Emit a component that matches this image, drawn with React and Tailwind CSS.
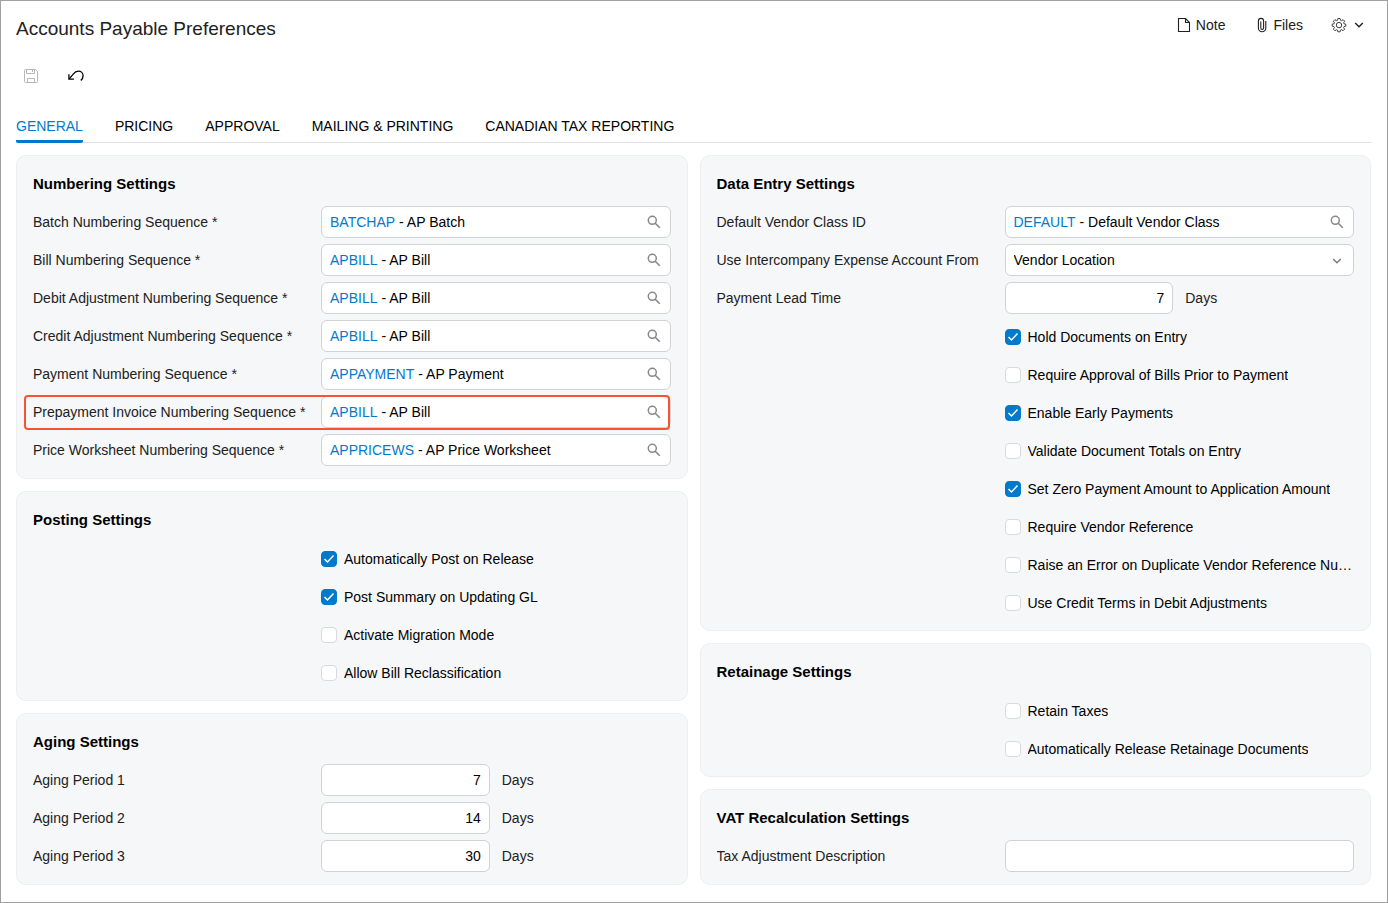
import React, { useId, useState } from "react";

const numberingRows = [
  { label: "Batch Numbering Sequence", code: "BATCHAP", name: "AP Batch" },
  { label: "Bill Numbering Sequence", code: "APBILL", name: "AP Bill" },
  { label: "Debit Adjustment Numbering Sequence", code: "APBILL", name: "AP Bill" },
  { label: "Credit Adjustment Numbering Sequence", code: "APBILL", name: "AP Bill" },
  { label: "Payment Numbering Sequence", code: "APPAYMENT", name: "AP Payment" },
  { label: "Prepayment Invoice Numbering Sequence", code: "APBILL", name: "AP Bill", highlight: true },
  { label: "Price Worksheet Numbering Sequence", code: "APPRICEWS", name: "AP Price Worksheet" },
];

const postingOptions = [
  { label: "Automatically Post on Release", checked: true },
  { label: "Post Summary on Updating GL", checked: true },
  { label: "Activate Migration Mode" },
  { label: "Allow Bill Reclassification" },
];

const agingRows = [
  { label: "Aging Period 1", value: "7" },
  { label: "Aging Period 2", value: "14" },
  { label: "Aging Period 3", value: "30" },
];

const dataEntryOptions = [
  { label: "Hold Documents on Entry", checked: true },
  { label: "Require Approval of Bills Prior to Payment" },
  { label: "Enable Early Payments", checked: true },
  { label: "Validate Document Totals on Entry" },
  { label: "Set Zero Payment Amount to Application Amount", checked: true },
  { label: "Require Vendor Reference" },
  { label: "Raise an Error on Duplicate Vendor Reference Number" },
  { label: "Use Credit Terms in Debit Adjustments" },
];

const retainageOptions = [
  { label: "Retain Taxes" },
  { label: "Automatically Release Retainage Documents" },
];

const tabs = ["GENERAL", "PRICING", "APPROVAL", "MAILING & PRINTING", "CANADIAN TAX REPORTING"];

const SaveIcon = () => (
  <svg width="16" height="16" viewBox="0 0 16 16" fill="none" stroke="#b5b7ba">
    <path d="M2.5 1.5h10l2 2v10a1 1 0 0 1-1 1h-11a1 1 0 0 1-1-1v-11a1 1 0 0 1 1-1z" />
    <path d="M3.5 1.5v4h8v-4M9.5 2v2M4.5 14.5v-4h7v4" />
  </svg>
);

const UndoIcon = () => (
  <svg width="18" height="16" viewBox="0 0 18 16" fill="none" stroke="#000" strokeWidth="1.3">
    <path d="M2.2 10.8L6 6.4C7.500 4.500 9 3.200 11.300 3.200c2.800 0 4.800 2 4.800 4.500 0 2-.9 3.600-2.300 4.900" />
    <path d="M1.9 6.300v4.900h5" />
  </svg>
);

const NoteIcon = () => (
  <svg width="14" height="16" viewBox="0 0 14 16" fill="none" stroke="#212121" strokeWidth="1.1">
    <path d="M1.5 1.5h7l4 4v9h-11z" />
    <path d="M8.5 1.5v4h4" />
  </svg>
);

const ClipIcon = () => (
  <svg width="10" height="16" viewBox="0 0 10 16" fill="none" stroke="#212121" strokeWidth="1.1">
    <path d="M8.8 4v7a3.7 3.7 0 0 1-7.4 0V4a2.6 2.6 0 0 1 5.2 0v7a1.4 1.4 0 0 1-2.8 0V4.5" />
  </svg>
);

const GearIcon = () => (
  <svg width="16" height="16" viewBox="0 0 16 16" fill="none" stroke="#3c3c3c" strokeLinejoin="round">
    <path d="M6.9 1.5h2.2l.4 1.8 1 .4 1.6-1 1.5 1.5-1 1.6.4 1 1.8.4v2l-1.8.4-.4 1 1 1.6-1.5 1.5-1.6-1-1 .4-.4 1.7H6.9l-.4-1.7-1-.4-1.6 1-1.5-1.5 1-1.6-.4-1-1.8-.4v-2L3 6.800l.4-1-1-1.600 1.500-1.500 1.600 1 1-.4z" />
    <circle cx="8" cy="8.100" r="2.700" />
  </svg>
);

const ChevronIcon = ({ className }) => (
  <svg width="10" height="6" viewBox="0 0 10 6" fill="none" stroke="currentColor" strokeWidth="1.4" className={className}>
    <path d="M1.200 1l3.800 3.700L8.800 1" />
  </svg>
);

const SearchIcon = () => (
  <svg width="14" height="14" viewBox="0 0 14 14" fill="none" stroke="#85878a">
    <circle cx="5.300" cy="5.300" r="4" strokeWidth="1.500" />
    <path d="M8.200 8.200l4.600 4.600" strokeWidth="1.600" />
  </svg>
);

const Card = ({ title, children }) => (
  <section className="rounded-[10px] border border-[#eceef0] bg-[#f5f7f9] px-4 py-3">
    <h2 className="mb-1.5 text-[15px] leading-8 font-bold text-black">{title}</h2>
    <div className="flex flex-col gap-1.5">{children}</div>
  </section>
);

const Row = ({ label, htmlFor, required, highlight, children }) => (
  <div className="relative flex min-h-8 items-center">
    <label htmlFor={htmlFor} className="w-72 shrink-0 truncate">
      {label}
      {required && " *"}
    </label>
    <div className="flex min-w-0 flex-1 items-center">{children}</div>
    {highlight && (
      <div className="pointer-events-none absolute -top-px right-px -bottom-0.5 -left-[9px] rounded border-2 border-[#fa5332]" />
    )}
  </div>
);

const LookupField = ({ label, code, name, required, highlight }) => {
  const id = useId();
  return (
    <Row label={label} htmlFor={id} required={required} highlight={highlight}>
      <div className="flex h-8 w-full items-center gap-1 rounded-md border border-[#d0d2d6] bg-white px-2 text-black">
        <a href="#" className="text-[#027acc]">{code}</a>
        <input id={id} type="text" defaultValue={`- ${name}`} className="min-w-0 flex-1 outline-none" />
        <button type="button" aria-label={`Search ${label}`} className="flex size-4 items-center justify-center">
          <SearchIcon />
        </button>
      </div>
    </Row>
  );
};

const DaysField = ({ label, value }) => {
  const id = useId();
  return (
    <Row label={label} htmlFor={id}>
      <div className="grid w-full grid-cols-2 items-center gap-3">
        <input
          id={id}
          type="text"
          inputMode="numeric"
          defaultValue={value}
          className="h-8 w-full rounded-md border border-[#d0d2d6] bg-white px-2 text-right text-black outline-none"
        />
        <span>Days</span>
      </div>
    </Row>
  );
};

const CheckField = ({ label, checked = false }) => {
  const [value, setValue] = useState(checked);
  return (
    <div className="flex h-8 items-center pt-0.5 pl-72">
      <label className="flex min-w-0 items-center gap-[7px] text-black">
        <span className="relative flex size-4 shrink-0">
          <input
            type="checkbox"
            checked={value}
            onChange={(e) => setValue(e.target.checked)}
            className="size-4 appearance-none rounded border border-[#d8dadd] bg-white checked:border-[#027acc] checked:bg-[#027acc]"
          />
          {value && (
            <svg viewBox="0 0 16 16" fill="none" stroke="#fff" strokeWidth="1.5" className="pointer-events-none absolute inset-0">
              <path d="M3.500 8l3 3 6-6.500" />
            </svg>
          )}
        </span>
        <span className="truncate">{label}</span>
      </label>
    </div>
  );
};

const App = () => {
  const [activeTab, setActiveTab] = useState("GENERAL");
  const selectId = useId();
  const taxId = useId();

  return (
    <div className="min-h-screen border border-[#a0a0a0] bg-white pr-4 pb-4 pl-[15px] font-['Liberation_Sans',Arial,sans-serif] text-sm text-[#212121]">
      <header className="flex items-start justify-between pt-3">
        <h1 className="pt-1 text-[19px] leading-6">Accounts Payable Preferences</h1>
        <div className="flex items-center gap-7 pr-[7px] leading-6">
          <div className="flex items-center gap-8">
            <button type="button" className="flex items-center gap-[5px]">
              <NoteIcon />
              Note
            </button>
            <button type="button" className="flex items-center gap-1.5">
              <ClipIcon />
              Files
            </button>
          </div>
          <button type="button" aria-label="Settings" className="flex items-center gap-[7px]">
            <GearIcon />
            <ChevronIcon />
          </button>
        </div>
      </header>

      <div className="mt-[19px] flex h-8 items-center gap-7 pl-[7px]">
        <button type="button" aria-label="Save" disabled>
          <SaveIcon />
        </button>
        <button type="button" aria-label="Undo">
          <UndoIcon />
        </button>
      </div>

      <nav className="mt-5 flex gap-8 border-b border-[#e0e1e3]">
        {tabs.map((tab) => (
          <button
            key={tab}
            type="button"
            onClick={() => setActiveTab(tab)}
            className={
              activeTab === tab
                ? "-mb-px rounded-b-xs border-b-3 border-[#027acc] leading-7 text-[#027acc]"
                : "-mb-px border-b-3 border-transparent leading-7 text-black"
            }
          >
            {tab}
          </button>
        ))}
      </nav>

      <main className="mt-3 grid grid-cols-2 items-start gap-3">
        <div className="flex min-w-0 flex-col gap-3">
          <Card title="Numbering Settings">
            {numberingRows.map((row) => (
              <LookupField key={row.label} {...row} required />
            ))}
          </Card>
          <Card title="Posting Settings">
            {postingOptions.map((option) => (
              <CheckField key={option.label} {...option} />
            ))}
          </Card>
          <Card title="Aging Settings">
            {agingRows.map((row) => (
              <DaysField key={row.label} {...row} />
            ))}
          </Card>
        </div>

        <div className="flex min-w-0 flex-col gap-3">
          <Card title="Data Entry Settings">
            <LookupField label="Default Vendor Class ID" code="DEFAULT" name="Default Vendor Class" />
            <Row label="Use Intercompany Expense Account From" htmlFor={selectId}>
              <div className="relative w-full">
                <select
                  id={selectId}
                  className="block h-8 w-full appearance-none rounded-md border border-[#d0d2d6] bg-white px-2 text-black outline-none"
                >
                  <option>Vendor Location</option>
                </select>
                <ChevronIcon className="pointer-events-none absolute top-[14px] right-3 text-[#77797c]" />
              </div>
            </Row>
            <DaysField label="Payment Lead Time" value="7" />
            {dataEntryOptions.map((option) => (
              <CheckField key={option.label} {...option} />
            ))}
          </Card>
          <Card title="Retainage Settings">
            {retainageOptions.map((option) => (
              <CheckField key={option.label} {...option} />
            ))}
          </Card>
          <Card title="VAT Recalculation Settings">
            <Row label="Tax Adjustment Description" htmlFor={taxId}>
              <input
                id={taxId}
                type="text"
                className="h-8 w-full rounded-md border border-[#d0d2d6] bg-white px-2 text-black outline-none"
              />
            </Row>
          </Card>
        </div>
      </main>
    </div>
  );
};

export default App;
